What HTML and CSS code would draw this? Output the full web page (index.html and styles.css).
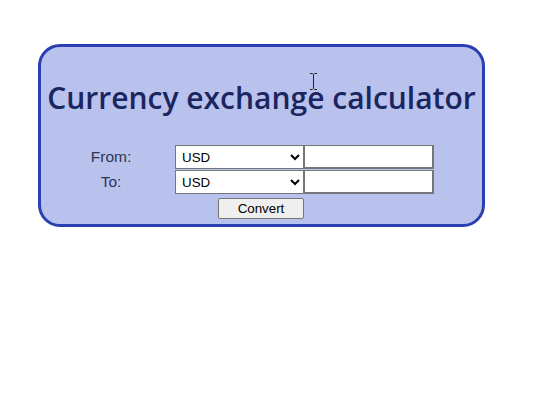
FILE: index.html
```html
<!DOCTYPE html>
<html>
<head>
<meta charset="utf-8">
<link rel="stylesheet" href="styles.css">
</head>
<body>
<div class="card">
  <h1 class="title">Currency exchange calculator</h1>
  <form class="form">
    <label class="label">From:</label>
    <select class="select"><option>USD</option></select>
    <input class="amount" type="text">
    <label class="label">To:</label>
    <select class="select"><option>USD</option></select>
    <input class="amount" type="text">
    <button class="convert" type="button">Convert</button>
  </form>
  <svg class="cursor" width="9" height="17" viewBox="0 0 9 17"><path d="M1 0.5h2.5l1 1 1-1H8M4.5 1.5v14M1 16.5h2.5l1-1 1 1H8" fill="none" stroke="#222" stroke-width="1"/></svg>
</div>
</body>
</html>
```
FILE: styles.css
```css
html, body { margin: 0; padding: 0; background: #fff; }
body { padding: 44px 0 0 38px; }
.card {
  position: relative;
  box-sizing: border-box;
  width: 447px;
  height: 183px;
  border: 3px solid #2a3fb1;
  border-radius: 22px;
  background: #b8c2ec;
}
.title {
  margin: 32px 0 0 0;
  text-align: center;
  white-space: nowrap;
  font-family: "Open Sans", sans-serif;
  font-weight: 600;
  font-size: 30px;
  line-height: 38px;
  color: #1b2560;
}
.form {
  display: grid;
  grid-template-columns: 86px 129px 130px;
  row-gap: 1px;
  width: 345px;
  margin: 28px auto 0;
}
.label {
  font-family: "Liberation Sans", Arial, sans-serif;
  font-size: 15.5px;
  color: #2d3552;
  text-align: center;
  padding-right: 42px;
  line-height: 24px;
}
.select {
  box-sizing: border-box;
  height: 24px;
  margin: 0;
  font-family: "Liberation Sans", Arial, sans-serif;
  font-size: 13.33px;
  border: 1px solid #767676;
  background: #fff;
  color: #000;
  padding: 0 0 0 2px;
}
.amount {
  box-sizing: border-box;
  height: 24px;
  margin: 0;
  border: 1px solid #767676;
  border-right-width: 2px;
  border-bottom-width: 2px;
  background: #fff;
  padding: 0 2px;
}
.convert {
  grid-column: 1 / -1;
  justify-self: start;
  margin: 3px 0 0 129px;
  box-sizing: border-box;
  width: 86px;
  height: 21px;
  font-family: "Liberation Sans", Arial, sans-serif;
  font-size: 13.33px;
  color: #000;
  background: #efefef;
  border: 1px solid #767676;
  border-radius: 2px;
  padding: 0;
}
.cursor {
  position: absolute;
  left: 268px;
  top: 26px;
}
```
